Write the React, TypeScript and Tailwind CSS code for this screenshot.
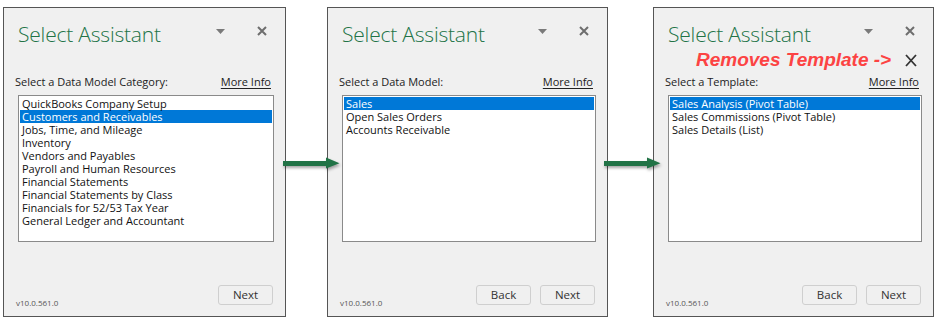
import React from "react";

const ui = "font-['Segoe_UI','Open_Sans',sans-serif]";

type PanelProps = {
  label: string;
  items: string[];
  selected: number;
  back?: boolean;
  note?: boolean;
};

function Panel({ label, items, selected, back, note, className }: PanelProps & { className?: string }) {
  return (
    <div
      className={`relative flex h-[310px] flex-col border border-[#555] bg-[#f0f0f0] ${ui} ${className ?? ""}`}
    >
      <div className="mt-[12px] flex h-[28px] items-center pl-[14px] pr-[18px]">
        <span className="font-['Segoe_UI','Open_Sans',sans-serif] text-[21px] font-light leading-[28px] tracking-[-0.2px] text-[#217346]">
          Select Assistant
        </span>
        <svg className="ml-auto mt-[-6px]" width="9" height="5" viewBox="0 0 9 5">
          <path d="M0 0h9L4.5 5z" fill="#7a7a7a" />
        </svg>
        <svg className="ml-[32px] mt-[-6px]" width="10" height="10" viewBox="0 0 10 10">
          <path d="M1 1l8 8M9 1L1 9" stroke="#6e6e6e" strokeWidth="2" />
        </svg>
      </div>

      {note && (
        <div className="absolute left-[42px] top-[41px] flex items-center">
          <span className="font-['Liberation_Sans',Arial,sans-serif] text-[19px] font-bold italic leading-[22px] text-[#fc4343]">
            Removes Template -&gt;
          </span>
          <svg className="ml-[14px]" width="12" height="13" viewBox="0 0 12 13">
            <path d="M1 1l10 11M11 1L1 12" stroke="#333" strokeWidth="1.8" />
          </svg>
        </div>
      )}

      <div className="mt-[26px] flex h-[16px] items-center justify-between pl-[11px] pr-[14px] text-[11px] leading-[16px] text-[#222]">
        <span>{label}</span>
        <span className="underline underline-offset-2">More Info</span>
      </div>

      <div className="ml-[14px] mr-[11px] mt-[5px] h-[147px] border border-[#8a8a8a] bg-white p-[1px]">
        {items.map((item, i) => (
          <div
            key={item}
            className={`h-[13px] whitespace-nowrap pl-[2px] text-[11px] leading-[13px] ${
              i === selected ? "bg-[#0078d7] text-white" : "text-[#111]"
            }`}
          >
            {item}
          </div>
        ))}
      </div>

      <div className="mb-[11px] mt-auto flex h-[20px] items-start pl-[12px] pr-[12px]">
        <span className="pt-[13px] text-[8px] leading-[10px] text-[#555]">v10.0.561.0</span>
        <div className="ml-auto flex gap-[9px]">
          {back && <Btn>Back</Btn>}
          <Btn>Next</Btn>
        </div>
      </div>
    </div>
  );
}

function Btn({ children }: { children: React.ReactNode }) {
  return (
    <div className="flex h-[20px] w-[55px] items-center justify-center rounded-[3px] border border-[#cfcfcf] bg-[#f0f0f0] text-[11.5px] text-[#333]">
      {children}
    </div>
  );
}

function Arrow({ left }: { left: number }) {
  return (
    <svg
      className="absolute top-[155px] drop-shadow-[1px_2px_1.5px_rgba(0,0,0,0.35)]"
      style={{ left }}
      width="57"
      height="16"
      viewBox="0 0 57 16"
    >
      <path d="M0 6h43V2.5L56.5 8.25 43 13.5V11H0z" fill="#217346" />
    </svg>
  );
}

export default function App() {
  return (
    <div className="relative h-[323px] w-[939px] overflow-hidden bg-white">
      <div className="flex pl-[3px] pt-[7px]">
        <Panel
          className="w-[283px]"
          label="Select a Data Model Category:"
          selected={1}
          items={[
            "QuickBooks Company Setup",
            "Customers and Receivables",
            "Jobs, Time, and Mileage",
            "Inventory",
            "Vendors and Payables",
            "Payroll and Human Resources",
            "Financial Statements",
            "Financial Statements by Class",
            "Financials for 52/53 Tax Year",
            "General Ledger and Accountant",
          ]}
        />
        <Panel
          className="ml-[41px] w-[281px]"
          label="Select a Data Model:"
          selected={0}
          back
          items={["Sales", "Open Sales Orders", "Accounts Receivable"]}
        />
        <Panel
          className="ml-[45px] w-[281px]"
          label="Select a Template:"
          selected={0}
          back
          note
          items={["Sales Analysis (Pivot Table)", "Sales Commissions (Pivot Table)", "Sales Details (List)"]}
        />
      </div>
      <Arrow left={283} />
      <Arrow left={604} />
    </div>
  );
}
